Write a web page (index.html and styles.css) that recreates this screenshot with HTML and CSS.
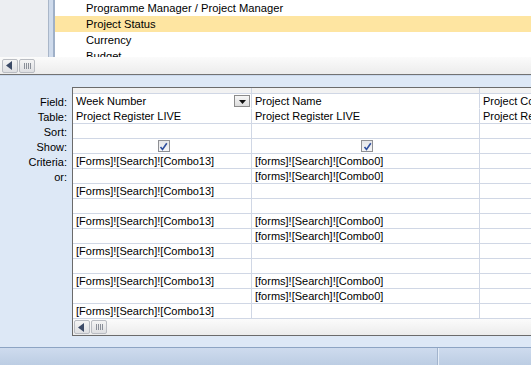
FILE: index.html
```html
<!DOCTYPE html>
<html lang="en">
<head>
    <meta charset="utf-8">
    <title>Query Design</title>
    <link rel="stylesheet" href="styles.css">
</head>
<body>
    <!-- Panel superior: tabla con su lista de campos -->
    <div class="table-area">
        <div class="nav-pane"></div>
        <div class="pane-edge"></div>
        <ul class="field-list">
            <li>Programme Manager / Project Manager</li>
            <li class="selected">Project Status</li>
            <li>Currency</li>
            <li>Budget</li>
        </ul>
    </div>

    <!-- Barra de desplazamiento del panel superior -->
    <div class="hscroll">
        <span class="scroll-btn"><svg width="6" height="9" viewBox="0 0 6 9"><path d="M6 0 L0 4.5 L6 9 Z" fill="#3b4a66"/></svg></span>
        <span class="scroll-thumb"><i></i><i></i><i></i><i></i></span>
    </div>

    <!-- Cuadrícula de diseño -->
    <div class="design-pane">
        <div class="row-labels">
            <div>Field:</div>
            <div>Table:</div>
            <div>Sort:</div>
            <div>Show:</div>
            <div>Criteria:</div>
            <div>or:</div>
        </div>

        <div class="qbe">
            <div class="qbe-row qbe-head"><div class="c1"></div><div class="c2"></div><div class="c3"></div></div>
            <div class="qbe-row no-line">
                <div class="c1 with-drop">Week Number<span class="drop-btn"><svg width="7" height="4" viewBox="0 0 7 4"><path d="M0 0 H7 L3.5 4 Z" fill="#111"/></svg></span></div>
                <div class="c2">Project Name</div>
                <div class="c3">Project Code</div>
            </div>
            <div class="qbe-row"><div class="c1">Project Register LIVE</div><div class="c2">Project Register LIVE</div><div class="c3">Project Register LIVE</div></div>
            <div class="qbe-row"><div class="c1"></div><div class="c2"></div><div class="c3"></div></div>
            <div class="qbe-row">
                <div class="c1 center"><span class="check"><svg width="9" height="9" viewBox="0 0 9 9"><path d="M1.5 5 L3.5 7.5 L7.8 1.2" stroke="#2f4f9e" stroke-width="1.6" fill="none"/></svg></span></div>
                <div class="c2 center"><span class="check"><svg width="9" height="9" viewBox="0 0 9 9"><path d="M1.5 5 L3.5 7.5 L7.8 1.2" stroke="#2f4f9e" stroke-width="1.6" fill="none"/></svg></span></div>
                <div class="c3"></div>
            </div>
            <div class="qbe-row"><div class="c1">[Forms]![Search]![Combo13]</div><div class="c2">[forms]![Search]![Combo0]</div><div class="c3"></div></div>
            <div class="qbe-row"><div class="c1"></div><div class="c2">[forms]![Search]![Combo0]</div><div class="c3"></div></div>
            <div class="qbe-row"><div class="c1">[Forms]![Search]![Combo13]</div><div class="c2"></div><div class="c3"></div></div>
            <div class="qbe-row"><div class="c1"></div><div class="c2"></div><div class="c3"></div></div>
            <div class="qbe-row"><div class="c1">[Forms]![Search]![Combo13]</div><div class="c2">[forms]![Search]![Combo0]</div><div class="c3"></div></div>
            <div class="qbe-row"><div class="c1"></div><div class="c2">[forms]![Search]![Combo0]</div><div class="c3"></div></div>
            <div class="qbe-row"><div class="c1">[Forms]![Search]![Combo13]</div><div class="c2"></div><div class="c3"></div></div>
            <div class="qbe-row"><div class="c1"></div><div class="c2"></div><div class="c3"></div></div>
            <div class="qbe-row"><div class="c1">[Forms]![Search]![Combo13]</div><div class="c2">[forms]![Search]![Combo0]</div><div class="c3"></div></div>
            <div class="qbe-row"><div class="c1"></div><div class="c2">[forms]![Search]![Combo0]</div><div class="c3"></div></div>
            <div class="qbe-row"><div class="c1">[Forms]![Search]![Combo13]</div><div class="c2"></div><div class="c3"></div></div>

            <div class="qbe-scroll">
                <span class="scroll-btn"><svg width="6" height="9" viewBox="0 0 6 9"><path d="M6 0 L0 4.5 L6 9 Z" fill="#3b4a66"/></svg></span>
                <span class="scroll-thumb"><i></i><i></i><i></i><i></i></span>
            </div>
        </div>
    </div>

    <!-- Barra de estado -->
    <div class="status-bar">
        <div class="status-main"></div>
        <div class="status-side"></div>
    </div>
</body>
</html>
```

FILE: styles.css
```css
body {
    margin: 0;
    padding: 0;
    width: 531px;
    height: 365px;
    overflow: hidden;
    font-family: "Liberation Sans", Arial, sans-serif;
    font-size: 11px;
    color: #000;
    background-color: #dde8f6;
}

/* Panel superior */
.table-area {
    display: flex;
    height: 57px;
    overflow: hidden;
}

.nav-pane {
    width: 48px;
    background-color: #eceef2;
    border-right: 1px solid #a9b6c9;
}

.pane-edge {
    width: 4px;
    background-color: #cfdbec;
    border-right: 2px solid #9fb0c8;
}

.field-list {
    flex: 1;
    list-style: none;
    margin: 0;
    padding: 0;
    background: #ffffff;
}

.field-list li {
    height: 16px;
    line-height: 16px;
    padding-left: 31px;
    white-space: nowrap;
    font-size: 11.2px;
}

.field-list li.selected {
    background-color: #fee5a1;
}

/* Barras de desplazamiento */
.hscroll {
    display: flex;
    align-items: center;
    gap: 1px;
    height: 17px;
    padding-left: 2px;
    background: linear-gradient(#fbfbfb, #ececec);
    border-bottom: 1px solid #727272;
}

.scroll-btn, .scroll-thumb {
    box-sizing: border-box;
    display: flex;
    align-items: center;
    justify-content: center;
    width: 16px;
    height: 14px;
    border: 1px solid #b9bcc2;
    border-radius: 2px;
    background: linear-gradient(#f4f4f4, #dedfe2);
}

.scroll-btn svg {
    margin-left: -2px;
}

.scroll-thumb {
    gap: 1px;
}

.scroll-thumb i {
    width: 1px;
    height: 6px;
    background-color: #8a8f98;
}

/* Panel de diseño */
.design-pane {
    display: flex;
    gap: 5px;
    height: 273px;
    padding-top: 11px;
    box-sizing: border-box;
    overflow: hidden;
    border-top: 1px solid #c9d8ec;
    border-bottom: 1px solid #8da4c3;
}

.row-labels {
    width: 67px;
    padding-top: 7px;
    text-align: right;
    flex-shrink: 0;
}

.row-labels div {
    height: 15px;
    line-height: 16px;
}

.qbe {
    flex-shrink: 0;
    align-self: flex-start;
    border-top: 1px solid #6b6b6b;
    border-left: 1px solid #6b6b6b;
    border-bottom: 1px solid #6b6b6b;
    background: #ffffff;
}

.qbe-row {
    display: flex;
    height: 15px;
}

.qbe-row > div {
    box-sizing: border-box;
    height: 15px;
    line-height: 15px;
    padding-left: 3px;
    white-space: nowrap;
    overflow: hidden;
    border-right: 1px solid #d0d7e5;
    border-bottom: 1px solid #d0d7e5;
}

.qbe-row.no-line > div {
    border-bottom-color: #ffffff;
}

.qbe-head {
    height: 6px;
}

.qbe-head > div {
    height: 6px;
    background-color: #f2f2f2;
    border-bottom-color: #d0d7e5;
}

.c1 { width: 179px; }
.c2 { width: 228px; }
.c3 { width: 140px; }

.with-drop {
    position: relative;
}

.drop-btn {
    position: absolute;
    right: 1px;
    top: 1px;
    box-sizing: border-box;
    width: 16px;
    height: 12px;
    display: flex;
    align-items: flex-end;
    justify-content: center;
    padding-bottom: 2px;
    border: 1px solid #8b8b8b;
    background: linear-gradient(#f7f7f7, #dcdcdc);
}

.center {
    display: flex;
    justify-content: center;
    align-items: center;
}

.check {
    box-sizing: border-box;
    width: 12px;
    height: 12px;
    display: flex;
    align-items: center;
    justify-content: center;
    border: 1px solid #8f9094;
    background: linear-gradient(#e4e5e8, #f7f7f8);
}

.qbe-scroll {
    display: flex;
    align-items: center;
    gap: 1px;
    height: 16px;
    padding-left: 1px;
    background: linear-gradient(#fbfbfb, #ececec);
}

/* Barra de estado */
.status-bar {
    display: flex;
    height: 17px;
}

.status-main {
    width: 437px;
    background: linear-gradient(#cedbee, #bccde3);
    border-right: 1px solid #a2b4cd;
}

.status-side {
    flex: 1;
    background: linear-gradient(#cedbee, #bccde3);
    border-left: 1px solid #e6eef8;
}
```
